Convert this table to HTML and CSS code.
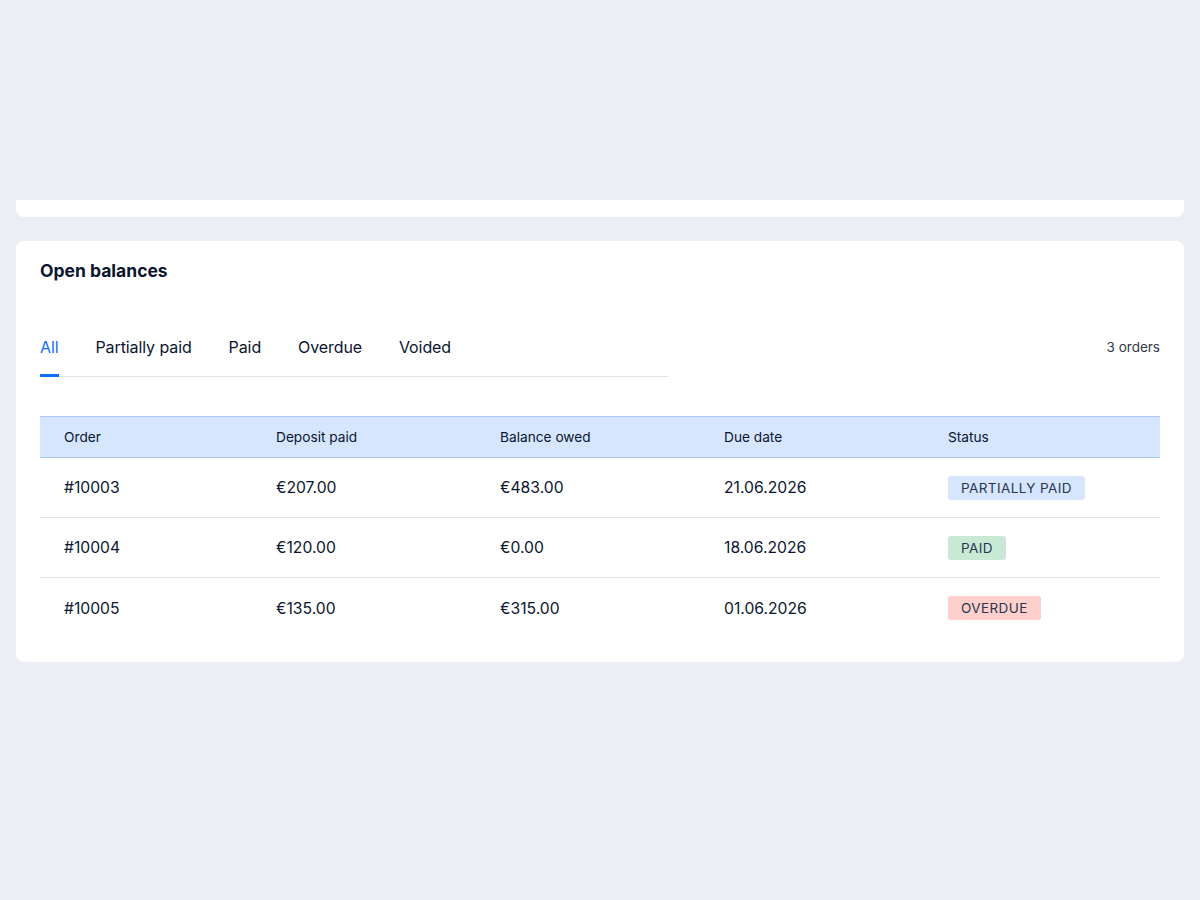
FILE: index.html
```html
<!DOCTYPE html>
<html>
<head>
<meta charset="utf-8">
<link rel="stylesheet" href="styles.css">
</head>
<body>
<div class="page">
  <div class="card card-top"></div>
  <section class="card balances">
    <h2 class="title">Open balances</h2>
    <div class="toolbar">
      <nav class="tabs">
        <span class="tab active">All</span>
        <span class="tab">Partially paid</span>
        <span class="tab">Paid</span>
        <span class="tab">Overdue</span>
        <span class="tab">Voided</span>
      </nav>
      <span class="count">3 orders</span>
    </div>
    <div class="table">
      <div class="row head">
        <div class="cell">Order</div>
        <div class="cell">Deposit paid</div>
        <div class="cell">Balance owed</div>
        <div class="cell">Due date</div>
        <div class="cell">Status</div>
      </div>
      <div class="row">
        <div class="cell">#10003</div>
        <div class="cell">€207.00</div>
        <div class="cell">€483.00</div>
        <div class="cell">21.06.2026</div>
        <div class="cell"><span class="badge partial">PARTIALLY PAID</span></div>
      </div>
      <div class="row">
        <div class="cell">#10004</div>
        <div class="cell">€120.00</div>
        <div class="cell">€0.00</div>
        <div class="cell">18.06.2026</div>
        <div class="cell"><span class="badge paid">PAID</span></div>
      </div>
      <div class="row last">
        <div class="cell">#10005</div>
        <div class="cell">€135.00</div>
        <div class="cell">€315.00</div>
        <div class="cell">01.06.2026</div>
        <div class="cell"><span class="badge overdue">OVERDUE</span></div>
      </div>
    </div>
  </section>
</div>
</body>
</html>
```

FILE: styles.css
```css
* { box-sizing: border-box; }
html, body {
  margin: 0;
  padding: 0;
  background: #ebeef3;
  font-family: Inter, "Noto Sans", "Liberation Sans", sans-serif;
  color: #0b1530;
}
.page {
  padding: 200px 16px 0;
  display: flex;
  flex-direction: column;
  gap: 24px;
}
.card {
  background: #fff;
  border-radius: 8px;
}
.card-top {
  height: 17px;
  border-radius: 0 0 8px 8px;
}
.balances {
  padding: 18px 24px 24px;
}
.title {
  margin: 0;
  font-size: 17.5px;
  font-weight: 700;
  line-height: 24px;
}
.toolbar {
  margin-top: 46px;
  display: flex;
  justify-content: space-between;
  align-items: flex-start;
}
.tabs {
  width: 628px;
  display: flex;
  gap: 37px;
  border-bottom: 1px solid #dfe3ea;
}
.tab {
  font-size: 16px;
  line-height: 24px;
  padding: 6px 0 15px;
  border-bottom: 3px solid transparent;
  margin-bottom: -1px;
  letter-spacing: -0.1px;
}
.tab.active {
  color: #116dff;
  border-bottom-color: #116dff;
}
.count {
  font-size: 13.5px;
  line-height: 24px;
  padding-top: 6px;
  color: #32394a;
}
.table {
  margin-top: 39px;
}
.row {
  display: grid;
  grid-template-columns: 212px 224px 224px 224px 1fr;
  align-items: center;
  height: 60px;
  border-bottom: 1px solid #e3e5ea;
  font-size: 15.7px;
}
.row.last { border-bottom: none; }
.row.head {
  height: 42px;
  background: #d5e6fe;
  border-top: 1px solid #a9c9f8;
  border-bottom: 1px solid #a9c9f8;
  font-size: 13.7px;
}
.cell {
  padding: 0 24px;
  white-space: nowrap;
}
.badge {
  display: inline-block;
  height: 24px;
  line-height: 24px;
  padding: 0 13px;
  border-radius: 3px;
  font-size: 13.5px;
  letter-spacing: 0.4px;
  color: #2c3550;
}
.badge.partial { background: #d5e6fe; }
.badge.paid { background: #c8ead5; }
.badge.overdue { background: #fdd0cc; }
```
